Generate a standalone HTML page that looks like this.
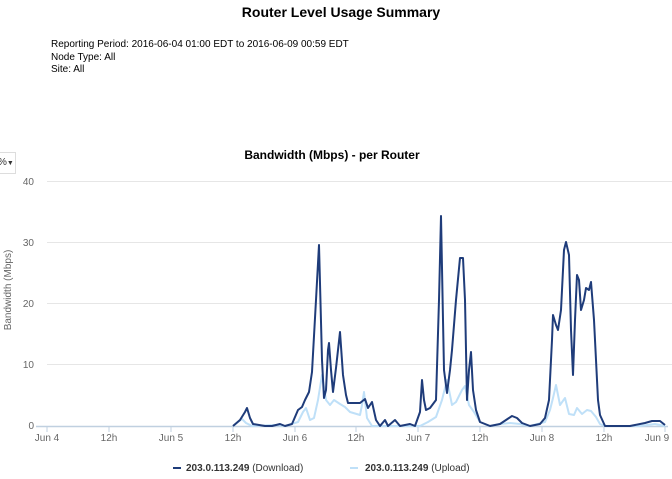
<!DOCTYPE html>
<html><head><meta charset="utf-8"><style>
body{margin:0;width:672px;height:479px;background:#fff;font-family:"Liberation Sans",sans-serif;overflow:hidden;position:relative}
.t{position:absolute;left:0;width:672px;top:4px;text-align:center;font-weight:bold;font-size:14px;color:#000;padding-left:10px;box-sizing:border-box}
.m{position:absolute;left:51px;top:39px;font-size:10px;line-height:12.5px;color:#000}
</style></head><body>
<div class="t">Router Level Usage Summary</div>
<div class="m">Reporting Period: 2016-06-04 01:00 EDT to 2016-06-09 00:59 EDT<br>Node Type: All<br>Site: All</div>
<div style="position:absolute;left:-2px;top:152px;width:17px;height:20px;border:1px solid #ddd;border-left:none;font-size:10px;line-height:20px;color:#333">%<span style="font-size:7px">▼</span></div>
<svg width="672" height="479" style="position:absolute;left:0;top:0" font-family="Liberation Sans, sans-serif">
<text x="332" y="159" text-anchor="middle" font-size="12" font-weight="bold">Bandwidth (Mbps) - per Router</text>
<g stroke="#e6e6e6" stroke-width="1">
<line x1="47" y1="181.5" x2="672" y2="181.5"/><line x1="47" y1="242.5" x2="672" y2="242.5"/><line x1="47" y1="303.5" x2="672" y2="303.5"/><line x1="47" y1="364.5" x2="672" y2="364.5"/>
</g>
<line x1="36" y1="426.5" x2="668" y2="426.5" stroke="#c0d0e0" stroke-width="1.5"/>
<g stroke="#c0d0e0"><line x1="47" y1="426" x2="47" y2="432"/><line x1="109" y1="426" x2="109" y2="432"/><line x1="171" y1="426" x2="171" y2="432"/><line x1="233" y1="426" x2="233" y2="432"/><line x1="295" y1="426" x2="295" y2="432"/><line x1="356" y1="426" x2="356" y2="432"/><line x1="418" y1="426" x2="418" y2="432"/><line x1="480" y1="426" x2="480" y2="432"/><line x1="542" y1="426" x2="542" y2="432"/><line x1="604" y1="426" x2="604" y2="432"/><line x1="665" y1="426" x2="665" y2="432"/></g>
<g font-size="10" fill="#666" text-anchor="end"><text x="34" y="185">40</text><text x="34" y="246">30</text><text x="34" y="307">20</text><text x="34" y="368">10</text><text x="34" y="429">0</text></g>
<g font-size="10" fill="#666" text-anchor="middle"><text x="47" y="441">Jun 4</text><text x="109" y="441">12h</text><text x="171" y="441">Jun 5</text><text x="233" y="441">12h</text><text x="295" y="441">Jun 6</text><text x="356" y="441">12h</text><text x="418" y="441">Jun 7</text><text x="480" y="441">12h</text><text x="542" y="441">Jun 8</text><text x="604" y="441">12h</text><text x="657" y="441">Jun 9</text></g>
<text transform="translate(11,290) rotate(-90)" font-size="10" fill="#666" text-anchor="middle">Bandwidth (Mbps)</text>
<polyline fill="none" stroke="#bfe0f8" stroke-width="2" stroke-linejoin="round" points="233,426 238,422 242,419 246,423 252,426 275,425 285,426 298,422 303,412 306,408 310,420 314,418 318,400 322,375 326,400 330,405 334,400 340,404 345,407 350,412 360,415 362,405 364,392 367,418 372,426 420,426 428,422 436,417 442,400 447,380 452,405 456,402 462,390 465,386 469,405 474,412 480,422 490,426 500,424 510,423 520,424 530,426 545,422 550,410 553,398 556,385 560,405 565,398 569,414 574,415 577,408 582,414 587,410 591,411 596,417 600,424 605,426 640,426 655,424 665,426"/>
<polyline fill="none" stroke="#1f3c7a" stroke-width="2" stroke-linejoin="round" points="233,426 240,420 245,412 247,408 250,418 253,424 265,426 272,426 280,424 285,426 292,424 298,410 302,407 305,400 309,392 312,372 316,300 319,245 322,360 324,398 326,390 328,350 329,343 331,370 333,392 336,368 340,332 343,375 346,395 348,403 360,403 365,399 368,408 372,402 376,420 380,426 385,420 388,426 395,420 400,426 410,424 415,426 420,412 422,380 424,400 426,410 430,408 436,400 439,300 441,216 443,320 444,370 447,393 450,370 452,350 456,300 460,258 463,258 465,300 467,400 469,370 471,352 473,390 476,410 480,422 490,426 500,424 506,420 512,416 517,418 522,423 530,426 540,424 545,418 549,400 552,340 553,315 556,325 558,330 561,310 564,250 566,242 569,255 571,330 573,375 575,320 577,275 579,280 581,310 584,300 586,288 589,290 591,282 594,320 596,360 598,400 600,415 605,426 630,426 645,423 652,421 660,421 665,425"/>
<line x1="173" y1="468" x2="181" y2="468" stroke="#1f3c7a" stroke-width="2"/>
<text x="186" y="471" font-size="10" font-weight="bold" fill="#333">203.0.113.249 <tspan font-weight="normal">(Download)</tspan></text>
<line x1="350" y1="468" x2="358" y2="468" stroke="#bfe0f8" stroke-width="2"/>
<text x="365" y="471" font-size="10" font-weight="bold" fill="#333">203.0.113.249 <tspan font-weight="normal">(Upload)</tspan></text>
</svg>
</body></html>
